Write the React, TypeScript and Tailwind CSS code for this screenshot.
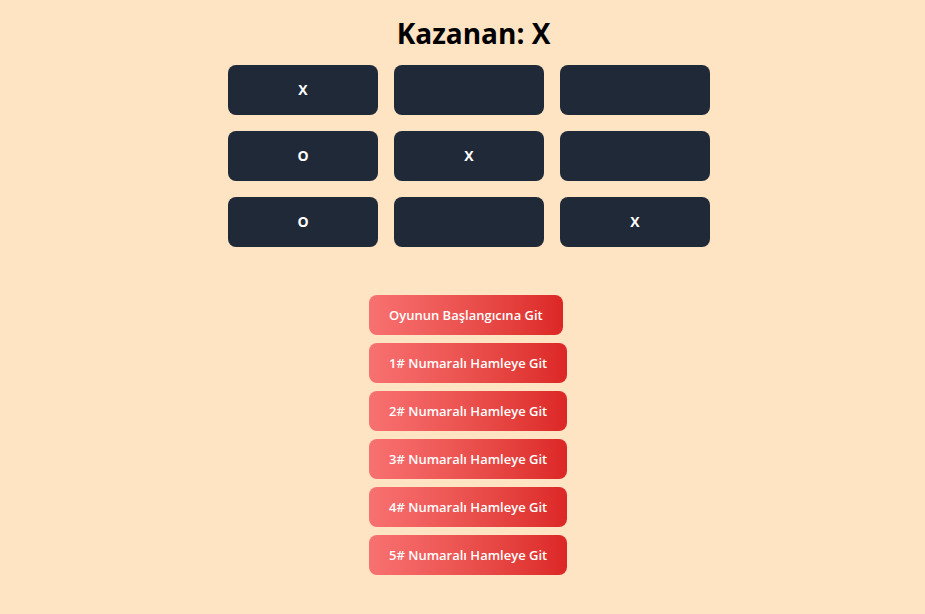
const squares = ["X", "", "", "O", "X", "", "O", "", "X"];

const moves = [
  "Oyunun Başlangıcına Git",
  "1# Numaralı Hamleye Git",
  "2# Numaralı Hamleye Git",
  "3# Numaralı Hamleye Git",
  "4# Numaralı Hamleye Git",
  "5# Numaralı Hamleye Git",
];

export default function App() {
  return (
    <div className="min-h-[614px] bg-[#ffe4c4] pl-[13px] font-['Open_Sans',sans-serif] text-black">
      <div className="flex flex-col items-center pt-[14px]">
        <h1 className="pl-[9px] text-[28px] font-bold leading-[38px]">Kazanan: X</h1>
        <div className="mt-[13px] grid grid-cols-[repeat(3,150px)] gap-4">
          {squares.map((sq, i) => (
            <button
              key={i}
              className="h-[50px] rounded-lg bg-[#1f2937] text-sm font-bold text-white"
            >
              {sq}
            </button>
          ))}
        </div>
        <div className="mt-12 flex w-[200px] flex-col items-start gap-2">
          {moves.map((m) => (
            <button
              key={m}
              className="h-10 rounded-lg bg-gradient-to-r from-[#f87171] to-[#dc2626] px-5 pt-px text-[13px] font-semibold text-white"
            >
              {m}
            </button>
          ))}
        </div>
      </div>
    </div>
  );
}
